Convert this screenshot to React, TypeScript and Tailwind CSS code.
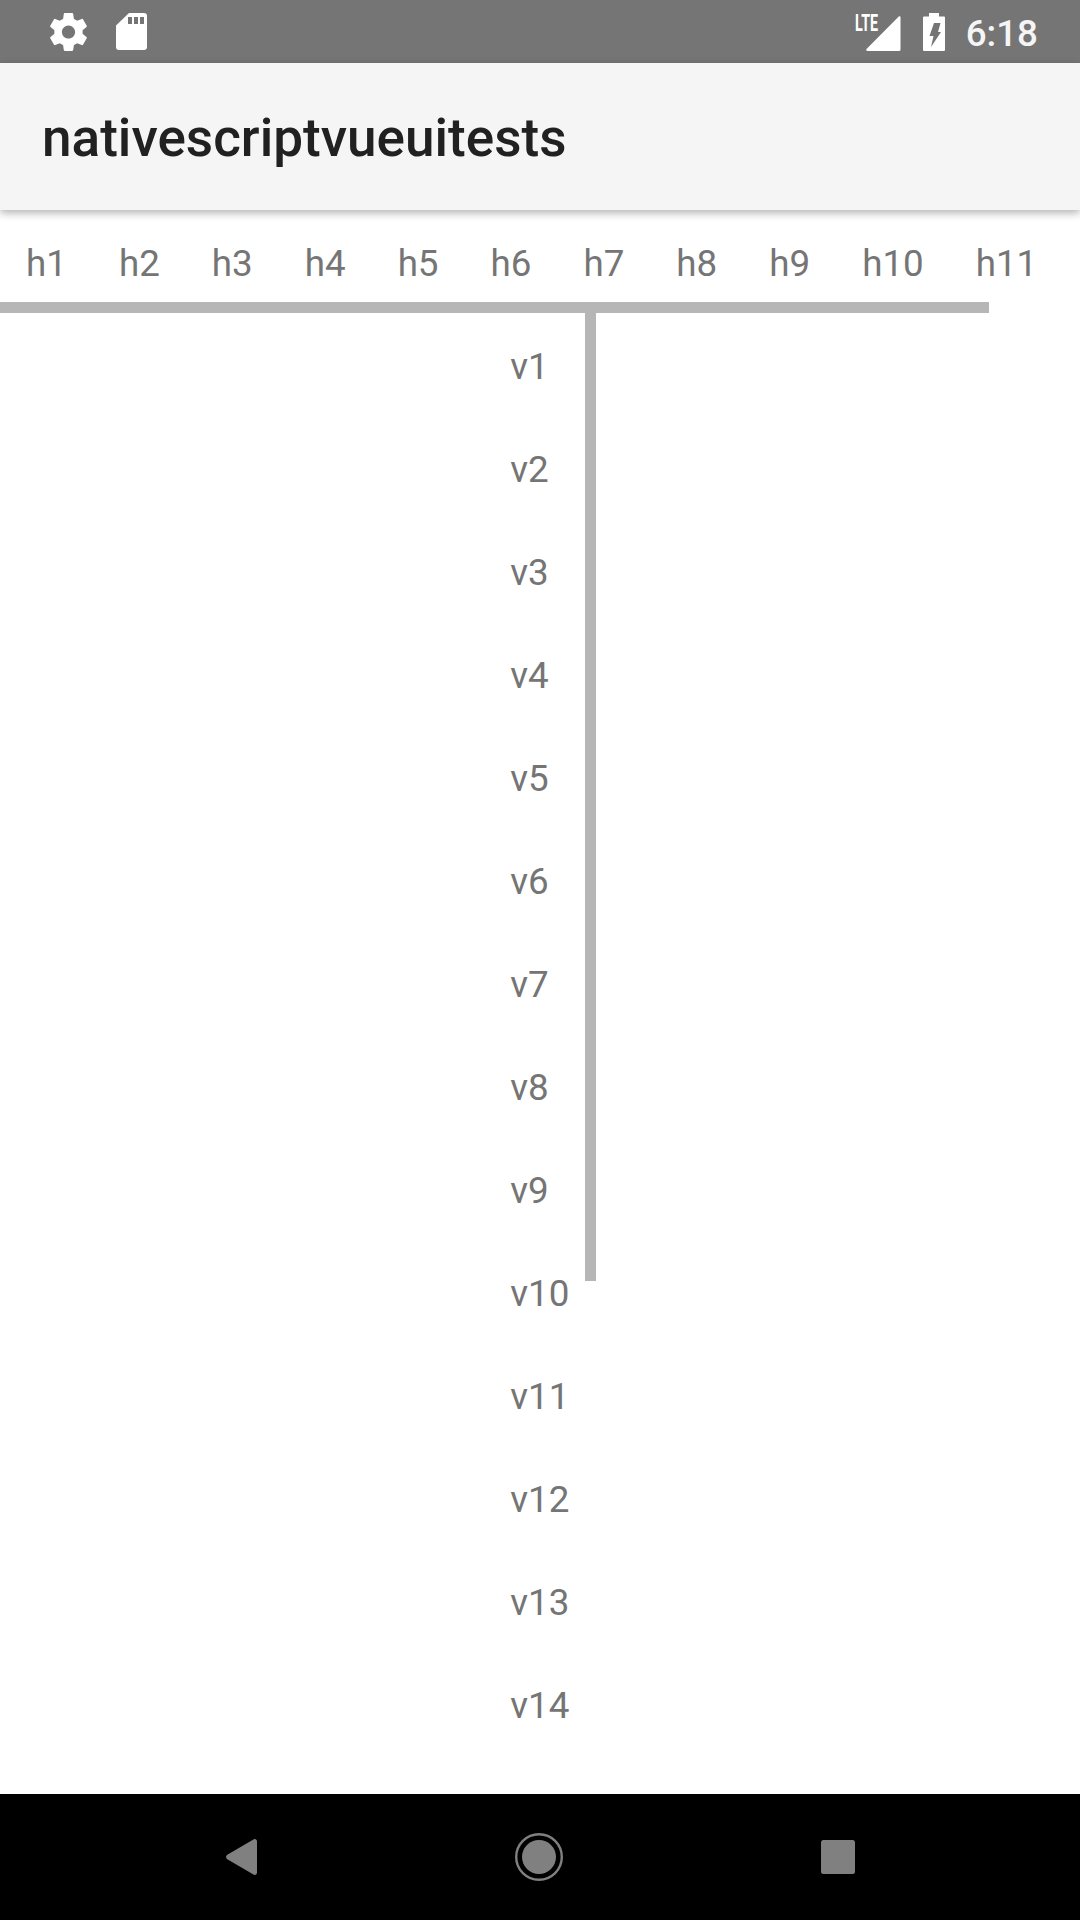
export default function App() {
  const hs = ["h1","h2","h3","h4","h5","h6","h7","h8","h9","h10","h11"];
  const vs = ["v1","v2","v3","v4","v5","v6","v7","v8","v9","v10","v11","v12","v13","v14"];
  return (
    <div className="flex h-[1920px] w-[1080px] flex-col overflow-hidden bg-white font-['Roboto',sans-serif]">
      <div className="flex h-[63px] shrink-0 items-center bg-[#757575] pl-[50px] pr-[42px]">
        <svg viewBox="2.2 2 19.6 20" className="h-[38px] w-[37px] fill-white">
          <path d="M19.43 12.98c.04-.32.07-.64.07-.98s-.03-.66-.07-.98l2.11-1.65c.19-.15.24-.42.12-.64l-2-3.46c-.12-.22-.39-.3-.61-.22l-2.49 1c-.52-.4-1.08-.73-1.69-.98l-.38-2.65C14.46 2.18 14.25 2 14 2h-4c-.25 0-.46.18-.49.42l-.38 2.65c-.61.25-1.17.59-1.69.98l-2.49-1c-.23-.09-.49 0-.61.22l-2 3.46c-.13.22-.07.49.12.64l2.11 1.65c-.04.32-.07.65-.07.98s.03.66.07.98l-2.11 1.65c-.19.15-.24.42-.12.64l2 3.46c.12.22.39.3.61.22l2.49-1c.52.4 1.08.73 1.69.98l.38 2.65c.03.24.24.42.49.42h4c.25 0 .46-.18.49-.42l.38-2.65c.61-.25 1.17-.59 1.69-.98l2.49 1c.23.09.49 0 .61-.22l2-3.46c.12-.22.07-.49-.12-.64l-2.11-1.65zM12 15.5c-1.93 0-3.5-1.57-3.5-3.5s1.57-3.5 3.5-3.5 3.5 1.57 3.5 3.5-1.57 3.5-3.5 3.5z" />
        </svg>
        <svg viewBox="0 0 31 37" className="ml-[29px] h-[37px] w-[31px]">
          <path fill="#fff" fillRule="evenodd" d="M13 0H28a3 3 0 0 1 3 3V34a3 3 0 0 1-3 3H3a3 3 0 0 1-3-3V12.5ZM12 4V11H16V4ZM18 4V11H22V4ZM24 4V11H28V4Z" />
        </svg>
        <div className="ml-auto flex items-center">
          <div className="relative h-[38px] w-[46px]">
            <span className="absolute -top-[1px] left-0 origin-left scale-x-[0.62] text-[23px] font-bold leading-[23px] text-white">LTE</span>
            <svg viewBox="0 0 46 38" className="h-[38px] w-[46px]">
              <path fill="#fff" d="M45.5 3.5a1.2 1.2 0 0 1 0 .6V36.5a1.5 1.5 0 0 1-1.5 1.5H12.5c-1.2 0-1.7-1.2-1-2L43.5 3.7c.7-.7 2-.5 2 .3Z" />
            </svg>
          </div>
          <svg viewBox="0 0 22 38" className="ml-[22px] h-[38px] w-[22px]">
            <path fill="#fff" fillRule="evenodd" d="M6 0H16V3.5H21a1 1 0 0 1 1 1V37a1 1 0 0 1-1 1H1a1 1 0 0 1-1-1V4.5a1 1 0 0 1 1-1H6ZM11 10H17.5L15 19H18L8 34 10.5 23H6.5Z" />
          </svg>
          <span className="ml-[21px] pt-[3px] text-[36.75px] font-medium leading-[43px] text-[#f5f5f5]">6:18</span>
        </div>
      </div>

      <div className="relative z-10 flex h-[147px] shrink-0 items-center bg-[#f5f5f5] pl-[42px] pt-[5px] shadow-[0_3px_8px_rgba(0,0,0,0.3)]">
        <span className="text-[53.1px] font-medium text-[#212121]">nativescriptvueuitests</span>
      </div>

      <div className="relative flex h-[103px] shrink-0 overflow-hidden">
        {hs.map((h) => (
          <span key={h} className="shrink-0 px-[26px] pb-[28px] pt-[32px] text-[36.75px] leading-[43px] text-[#757575] first:pr-[26px] last:pl-[27px]">{h}</span>
        ))}
        <div className="absolute bottom-0 left-0 h-[11px] w-[989px] bg-[#b6b6b6]" />
      </div>

      <div className="flex min-h-0 flex-1 justify-center overflow-hidden">
        <div className="relative flex w-[112px] flex-col">
          {vs.map((v) => (
            <span key={v} className="shrink-0 px-[26.25px] pb-[28px] pt-[32px] text-[36.75px] leading-[43px] text-[#757575]">{v}</span>
          ))}
          <div className="absolute right-0 top-0 h-[968px] w-[11px] bg-[#b6b6b6]" />
        </div>
      </div>

      <div className="flex h-[126px] shrink-0 items-center bg-black">
        <div className="flex w-full items-center justify-between pl-[226px] pr-[225px]">
          <svg viewBox="0 0 31 36" className="h-[36px] w-[31px]">
            <path fill="#808080" d="M27 .7C28.8-.6 31 .2 31 2.5V33.5C31 35.8 28.8 36.6 27 35.3L1.3 20.3C-.4 19-.4 17 1.3 15.7Z" />
          </svg>
          <svg viewBox="0 0 48 48" className="h-[48px] w-[48px]">
            <circle cx="24" cy="24" r="22.8" fill="none" stroke="#808080" strokeWidth="2.4" />
            <circle cx="24" cy="24" r="17" fill="#808080" />
          </svg>
          <svg viewBox="0 0 34 34" className="h-[34px] w-[34px]">
            <rect width="34" height="34" rx="2.5" fill="#808080" />
          </svg>
        </div>
      </div>
    </div>
  );
}
